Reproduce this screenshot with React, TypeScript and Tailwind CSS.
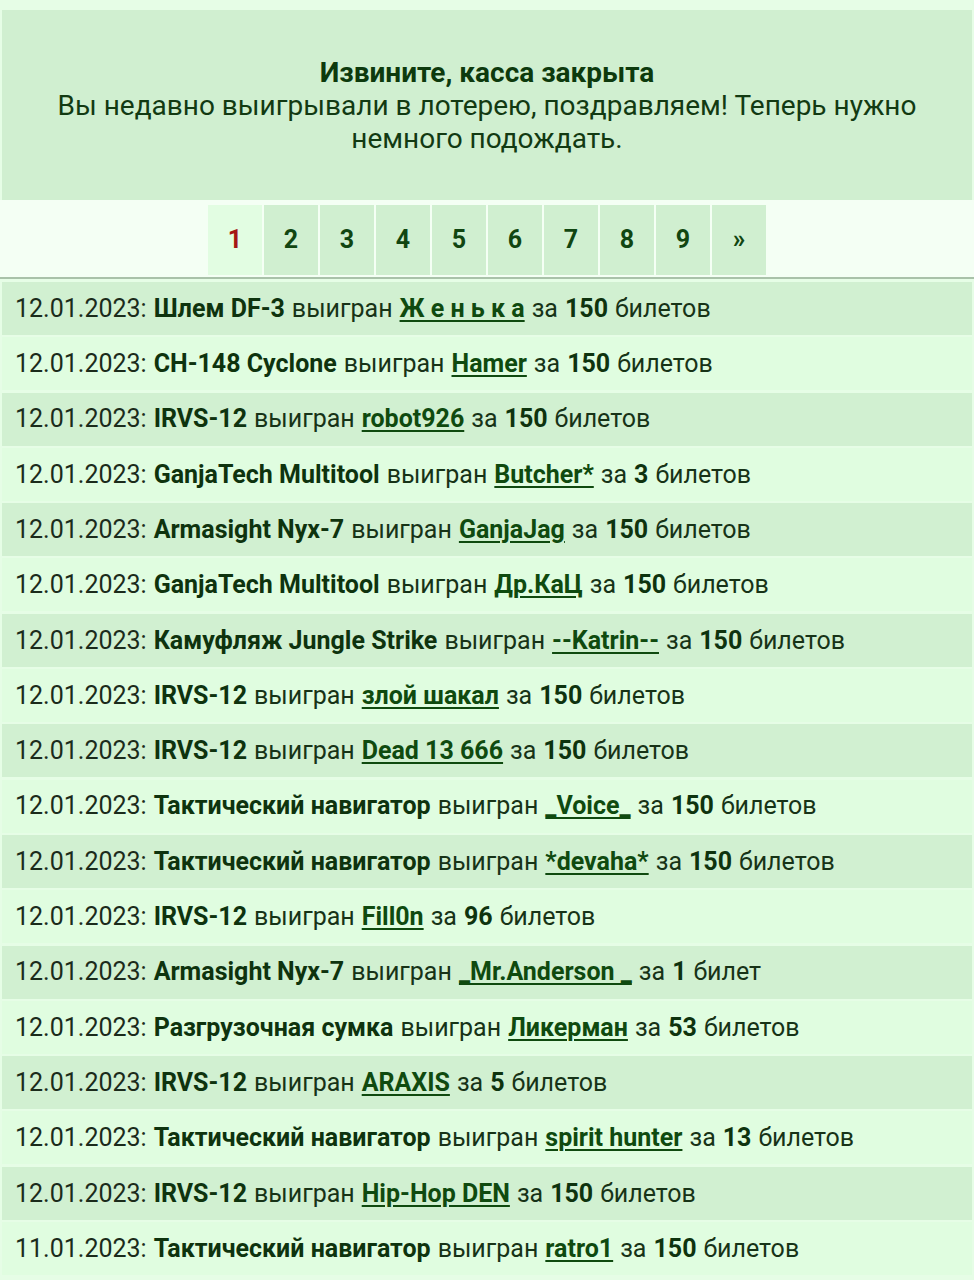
const WINS: [string, string, string, number][] = [
  ["12.01.2023", "Шлем DF-3", "Ж е н ь к а", 150],
  ["12.01.2023", "CH-148 Cyclone", "Hamer", 150],
  ["12.01.2023", "IRVS-12", "robot926", 150],
  ["12.01.2023", "GanjaTech Multitool", "Butcher*", 3],
  ["12.01.2023", "Armasight Nyx-7", "GanjaJag", 150],
  ["12.01.2023", "GanjaTech Multitool", "Др.КаЦ", 150],
  ["12.01.2023", "Камуфляж Jungle Strike", "--Katrin--", 150],
  ["12.01.2023", "IRVS-12", "злой шакал", 150],
  ["12.01.2023", "IRVS-12", "Dead 13 666", 150],
  ["12.01.2023", "Тактический навигатор", "_Voice_", 150],
  ["12.01.2023", "Тактический навигатор", "*devaha*", 150],
  ["12.01.2023", "IRVS-12", "Fill0n", 96],
  ["12.01.2023", "Armasight Nyx-7", "_Mr.Anderson _", 1],
  ["12.01.2023", "Разгрузочная сумка", "Ликерман", 53],
  ["12.01.2023", "IRVS-12", "ARAXIS", 5],
  ["12.01.2023", "Тактический навигатор", "spirit hunter", 13],
  ["12.01.2023", "IRVS-12", "Hip-Hop DEN", 150],
  ["11.01.2023", "Тактический навигатор", "ratro1", 150],
];

const PAGES = ["1", "2", "3", "4", "5", "6", "7", "8", "9", "»"];

function tickets(n: number) {
  if (n % 10 === 1 && n % 100 !== 11) return "билет";
  return "билетов";
}

export default function App() {
  return (
    <div
      className="min-h-[1280px] bg-[#e6fde6] pt-[10px] text-[25px] text-[#173317]"
      style={{ fontFamily: "Roboto, 'Noto Sans', sans-serif" }}
    >
      <div className="mx-[2px] bg-[#d0efd0] pt-[46px] pb-[45px] text-center text-[28px] leading-[33px] text-[#123a12]">
        <div className="font-bold text-[#0d3a0d]">Извините, касса закрыта</div>
        <div className="mx-auto max-w-[900px]">
          Вы недавно выигрывали в лотерею, поздравляем! Теперь нужно немного подождать.
        </div>
      </div>

      <div className="flex justify-center gap-[2px] border-b-2 border-[#a9c2a9] bg-[#f4fff4] pt-[5px] pb-[2px]">
        {PAGES.map((p, i) => (
          <div
            key={p}
            className={
              i === 0
                ? "flex h-[70px] w-[54px] items-center justify-center bg-[#e2fde2] font-bold text-[#a51616]"
                : "flex h-[70px] w-[54px] items-center justify-center bg-[#d0efd0] font-bold text-[#114611]"
            }
          >
            {p}
          </div>
        ))}
      </div>

      <div className="mx-[2px] mt-[3px] flex flex-col gap-[2.3px]">
        {WINS.map(([date, item, user, n], i) => (
          <div
            key={i}
            className={
              i % 2 === 0
                ? "flex h-[53px] items-center whitespace-nowrap bg-[#d1f0d1] pl-[13px]"
                : "flex h-[53px] items-center whitespace-nowrap bg-[#e0fde0] pl-[13px]"
            }
          >
            <span className="text-[#1b2b1b]">{date}:</span>
            <span className="ml-[7px] font-bold text-[#0e330e]">{item}</span>
            <span className="ml-[7px]">выигран</span>
            <span className="ml-[7px] font-bold text-[#0f4a0f] underline decoration-2 underline-offset-[3px]">
              {user}
            </span>
            <span className="ml-[7px]">за</span>
            <span className="ml-[7px] font-bold text-[#0e330e]">{n}</span>
            <span className="ml-[7px]">{tickets(n)}</span>
          </div>
        ))}
      </div>
    </div>
  );
}
